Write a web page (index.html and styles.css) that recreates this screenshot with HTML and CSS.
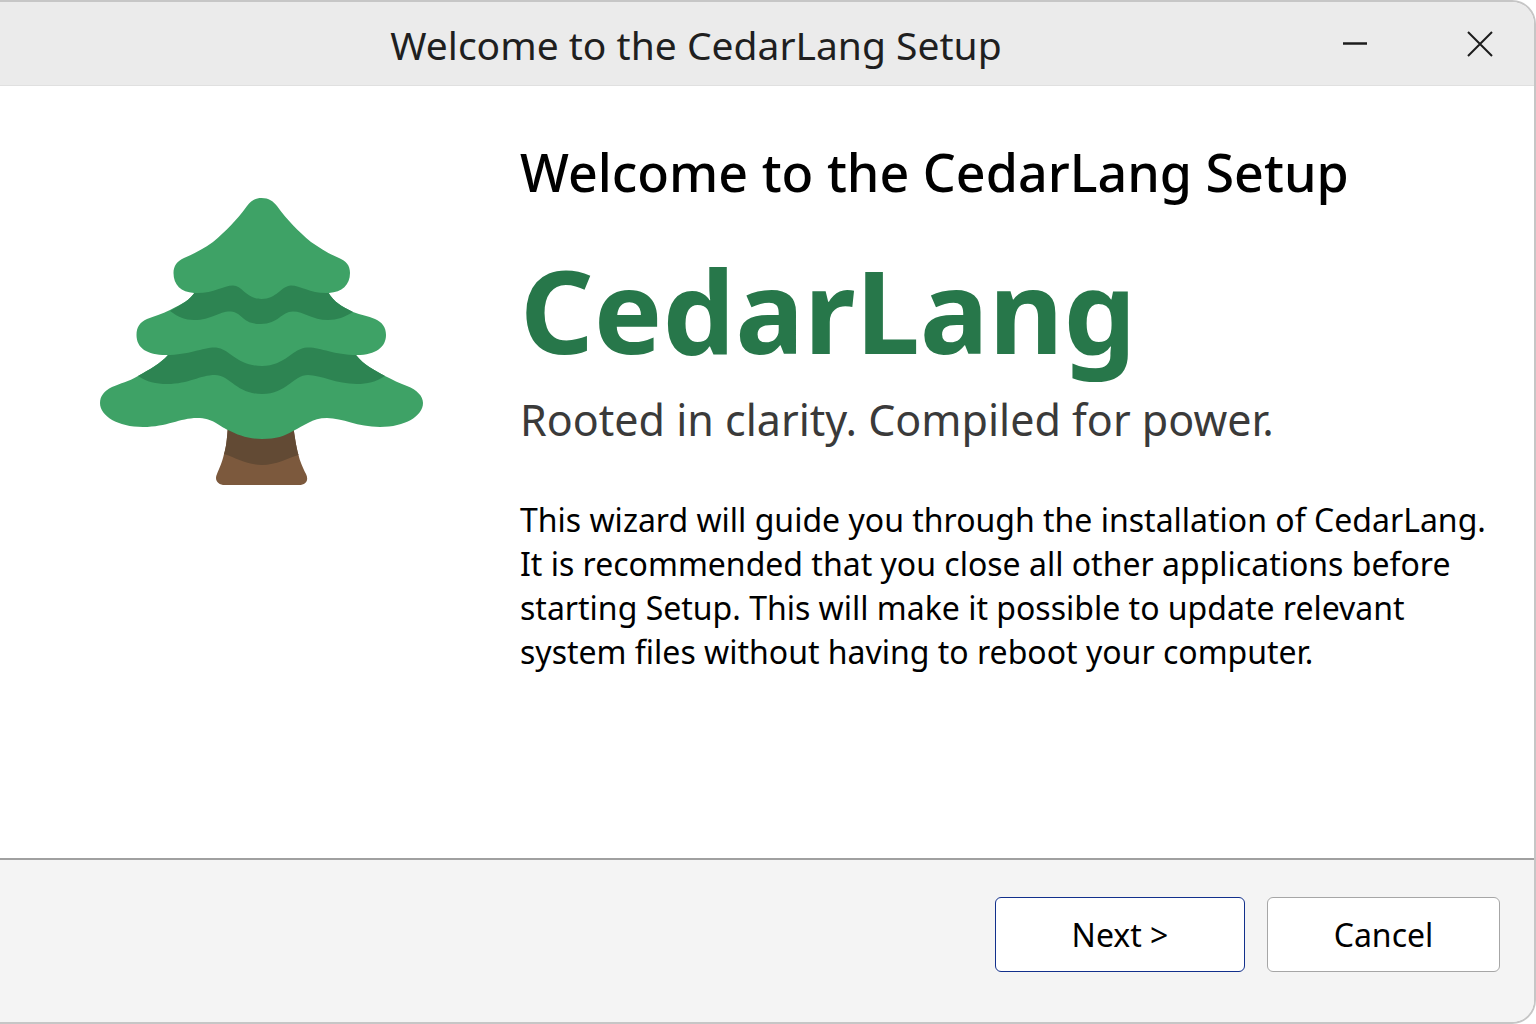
FILE: index.html
```
<!DOCTYPE html>
<html lang="en">
<head>
<meta charset="utf-8">
<meta name="viewport" content="width=device-width, initial-scale=1">
<title>Welcome to the CedarLang Setup</title>
<link rel="stylesheet" href="styles.css">
</head>
<body>
<div class="window">
  <header class="titlebar">
    <div class="titlebar-text">Welcome to the CedarLang Setup</div>
    <div class="controls">
      <button class="control" type="button" aria-label="Minimize">
        <svg width="26" height="26" viewBox="0 0 26 26" aria-hidden="true"><path d="M1 12.5H25" stroke="#1c1c1c" stroke-width="2.4"/></svg>
      </button>
      <button class="control" type="button" aria-label="Close">
        <svg width="26" height="26" viewBox="0 0 26 26" fill="none" aria-hidden="true"><path d="M1 1L25 25M25 1L1 25" stroke="#1c1c1c" stroke-width="2"/></svg>
      </button>
    </div>
  </header>
  <main class="content">
    <div class="art">
      <svg class="tree" viewBox="100 197 324 289" role="img" aria-label="Cedar tree">
        <path fill="#7c593d" d="M228 425C227 440 226 448 224 454C222 463 219 469 217 474C214 480 218 485 225 485H299C306 485 309 480 306 474C302 466 300 461 298.500 455C296 446 295 438 293 425Z"/>
        <path fill="#624a34" d="M228 425C227 440 226 448 224 454C236 458 248 465 262 465C276 465 288 458 298.500 455C296 446 295 438 293 425Z"/>
        <path fill="#3ea266" d="M168 355C160 364 150 369 138 376C128 382 121 383 112 387C104 391 100 396 100 403C100 416 118 427 143 427C167 427 180 418 197 418C213 418 219 426 228 430C238 435 248 439 262 439C276 439 285 436 293 431C304 426 312 418 327 418C343 418 357 427 380 427C405 427 423 416 423 403C423 396 417 390 407 386C399 383 393 380 385 376C374 370 364 365 356 355L320 330L200 330Z"/>
        <path fill="#2d8452" d="M168 355C160 364 150 369 138 376C147 382 156 384 167 384C189 384 200 375 215 375C230 375 236 394 262 394C287 394 293 375 308 375C321 375 336 384 357 384C367 384 376 382 385 376C374 370 364 365 356 355L320 330L200 330Z"/>
        <path fill="#3ea266" d="M195 292C190 300 182 304 170 310C162 314 154 316 147 319C140 322 136.500 327 136.500 335C136.500 348 147 355 166 355C190 355 203 347 216 347.500C230 349 237 366 262 366C285 366 293 348 307 347.500C321 347 333 355 357 355C376 355 386 347 386 335C386 327 382 322 375 319C368 316 361 315 353 312C341 306 334 302 328 292L300 275L225 275Z"/>
        <path fill="#2d8452" d="M195 292C190 300 182 304 170 311C178 317 185 320 194 320C212 320 219 311 231 311.500C243 313 242 324 260.500 324C279 324 281 311.500 293 311.500C304 311.500 312 320 328 320C337 320 345 317 353 312C341 306 334 302 328 292L300 275L225 275Z"/>
        <path fill="#3ea266" d="M261.500 198C255 198 251 201 247 206C236 221 226 231 213 242C203 249 194 254 184 258C177 261 173.500 266 173.500 273C173.500 285 181 292 194 293C213 294 223 285.500 233 285.500C243 286 246 299 261.500 299C277 299 281 286 291 285.500C301 285.500 311 294 329 293C342 292 350 285 350 273C350 265 346 261 339 258C329 254 320 248 311 242C298 231 288 221 277 206C273 201 269 198 261.500 198Z"/>
      </svg>
    </div>
    <div class="copy">
      <h1 class="heading">Welcome to the CedarLang Setup</h1>
      <p class="brand">CedarLang</p>
      <p class="tagline">Rooted in clarity. Compiled for power.</p>
      <p class="description">This wizard will guide you through the installation of CedarLang. It is recommended that you close all other applications before starting Setup. This will make it possible to update relevant system files without having to reboot your computer.</p>
    </div>
  </main>
  <footer class="actions">
    <button class="button button-primary" type="button">Next &gt;</button>
    <button class="button button-cancel" type="button">Cancel</button>
  </footer>
</div>
</body>
</html>
```
FILE: styles.css
```
* {
  box-sizing: border-box;
}

body {
  margin: 0;
  background: #fff;
  color: #000;
  font-family: "Noto Sans", sans-serif;
}

h1,
p {
  margin: 0;
}

button {
  font: inherit;
  color: inherit;
}

.window {
  display: flex;
  flex-direction: column;
  min-height: 100vh;
  overflow: hidden;
  border: 2px solid #c6c6c6;
  border-left: 0;
  border-radius: 0 24px 24px 0;
}

.titlebar {
  display: grid;
  grid-template-columns: 1fr auto;
  align-items: center;
  height: 84px;
  padding-right: 41px;
  background: #ebebeb;
  border-bottom: 1px solid #e0e0e0;
}

.titlebar-text {
  padding: 2px 0 0 50px;
  color: #1f1f1f;
  font-size: 39px;
  line-height: 56px;
  text-align: center;
}

.controls {
  display: flex;
  gap: 99px;
}

.control {
  display: flex;
  padding: 0;
  border: 0;
  background: none;
}

.content {
  flex: 1;
  display: grid;
  grid-template-columns: 520px 1fr;
  padding: 54px 24px 48px 0;
  background: #fff;
}

.art {
  padding: 57px 96px 0 100px;
}

.tree {
  display: block;
  width: 100%;
}

.heading {
  font-size: 52px;
  font-weight: 500;
  line-height: 64px;
}

.brand {
  margin-top: 46px;
  color: #27774a;
  font-size: 115px;
  font-weight: 700;
  line-height: 120px;
}

.tagline {
  margin-top: 22px;
  color: #3a3a3a;
  font-size: 43px;
  line-height: 56px;
}

.description {
  margin-top: 50px;
  font-size: 32px;
  line-height: 44px;
}

.actions {
  display: flex;
  justify-content: flex-end;
  gap: 22px;
  padding: 37px 34px 50px;
  border-top: 2px solid #a0a0a0;
  background: #f4f4f4;
}

.button {
  height: 75px;
  padding: 0;
  border: 1px solid #a6a6a6;
  border-radius: 6px;
  background: #fff;
  font-size: 32px;
  line-height: 44px;
}

.button-primary {
  width: 250px;
  border-color: #12308c;
}

.button-cancel {
  width: 233px;
}
```
